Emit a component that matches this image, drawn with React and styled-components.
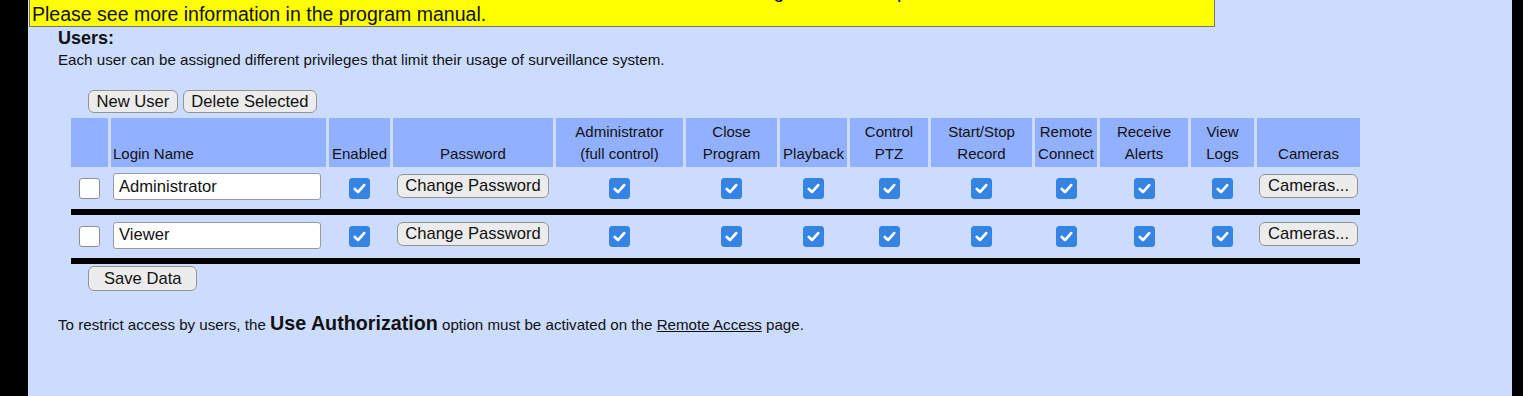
import React from 'react';
import styled, { createGlobalStyle } from 'styled-components';

const GlobalStyle = createGlobalStyle`
  html, body {
    margin: 0;
    padding: 0;
    background: #000;
  }
  body {
    font-family: "Liberation Sans", Arial, sans-serif;
    color: #111;
  }
`;

const Page = styled.div`
  display: flex;
  height: 396px;
  padding: 0 11px 0 28px;
  overflow: hidden;
`;

const Panel = styled.main`
  flex: 1;
  background: #ccdcff;
  overflow: hidden;
`;

const Notice = styled.div`
  box-sizing: border-box;
  width: 1186px;
  margin: -21px 0 0 1px;
  padding: 0 2px;
  background: #ffff00;
  border: 1px solid #767676;
  font-size: 19.5px;
  color: #111;
`;

const Section = styled.section`
  padding-left: 30px;
`;

const Heading = styled.h2`
  margin: 1px 0 0;
  font-size: 18px;
  line-height: 21px;
  font-weight: bold;
`;

const Note = styled.p`
  margin: 2px 0 0;
  font-size: 15.15px;
  line-height: 17px;
`;

const Toolbar = styled.div`
  display: flex;
  gap: 5px;
  margin: 22px 0 0 30px;
`;

const Button = styled.button`
  box-sizing: border-box;
  height: ${p => p.$h || 24}px;
  padding: 0 ${p => (p.$wide ? 15 : 7.5)}px;
  font-family: inherit;
  font-size: 16.6px;
  color: #111;
  background: #ececec;
  border: 1px solid #939393;
  border-radius: 6px;
  cursor: pointer;
`;

const Grid = styled.div`
  display: grid;
  grid-template-columns: 37px 215px 61px 160px 127px 91px 67px 78px 101px 62px 88px 63px 103px;
  column-gap: 3px;
  width: max-content;
  margin: 5px 0 0 13px;
`;

const HeadCell = styled.div`
  box-sizing: border-box;
  height: 49px;
  display: flex;
  align-items: flex-end;
  justify-content: ${p => (p.$left ? 'flex-start' : 'center')};
  padding: 3px 2px 2px;
  background: #91b0ff;
  font-size: 15px;
  line-height: 22px;
  text-align: center;
  white-space: nowrap;
`;

const Cell = styled.div`
  box-sizing: border-box;
  height: ${p => p.$h}px;
  display: flex;
  align-items: center;
  justify-content: ${p => (p.$left ? 'flex-start' : 'center')};
  padding-left: ${p => (p.$left ? 2 : 0)}px;
  padding-bottom: ${p => p.$lift || 0}px;
`;

const Divider = styled.div`
  grid-column: 1 / -1;
  height: 6px;
  background: #000;
`;

const Box = styled.span`
  box-sizing: border-box;
  width: 21px;
  height: 21px;
  display: inline-flex;
  align-items: center;
  justify-content: center;
  border-radius: 3px;
  background: ${p => (p.$on ? '#3584e4' : '#fff')};
  border: 1px solid ${p => (p.$on ? '#3584e4' : '#8f8f8f')};
`;

const NameInput = styled.input`
  box-sizing: border-box;
  width: 208px;
  height: 27px;
  padding: 0 5px;
  font-family: inherit;
  font-size: 16.6px;
  color: #111;
  background: #fff;
  border: 1px solid #9a9a9a;
  border-radius: 3px;
  outline: none;
`;

const SaveRow = styled.div`
  margin: 2px 0 0 30px;
`;

const Footer = styled.p`
  margin: 21px 0 0;
  font-size: 15.15px;
`;

const Big = styled.span`
  font-size: 19.7px;
  font-weight: bold;
`;

const PageLink = styled.a`
  color: #111;
  text-decoration: underline;
`;

const Check = ({ on }) => (
  <Box $on={on}>
    {on && (
      <svg width="15" height="15" viewBox="0 0 14 14">
        <path
          d="M2.6 7.4 L5.6 10.3 L11.4 3.8"
          fill="none"
          stroke="#fff"
          strokeWidth="2.5"
          strokeLinecap="round"
          strokeLinejoin="round"
        />
      </svg>
    )}
  </Box>
);

const columns = [
  [''],
  ['Login Name'],
  ['Enabled'],
  ['Password'],
  ['Administrator', '(full control)'],
  ['Close', 'Program'],
  ['Playback'],
  ['Control', 'PTZ'],
  ['Start/Stop', 'Record'],
  ['Remote', 'Connect'],
  ['Receive', 'Alerts'],
  ['View', 'Logs'],
  ['Cameras'],
];

const users = [
  { name: 'Administrator', h: 42 },
  { name: 'Viewer', h: 43 },
];

const rights = [0, 1, 2, 3, 4, 5, 6, 7];

const UserRow = ({ name, h }) => (
  <>
    <Cell $h={h}><Check on={false} /></Cell>
    <Cell $h={h} $left $lift={3}><NameInput defaultValue={name} /></Cell>
    <Cell $h={h}><Check on /></Cell>
    <Cell $h={h} $lift={5}><Button>Change Password</Button></Cell>
    {rights.map(r => (
      <Cell key={r} $h={h}><Check on /></Cell>
    ))}
    <Cell $h={h} $lift={5}><Button>Cameras...</Button></Cell>
    <Divider />
  </>
);

export default function App() {
  return (
    <>
      <GlobalStyle />
      <Page>
        <Panel>
          <Notice>
            To use this feature an account on the Remote Server must be created and a correct login name and password must be entered.
            <br />
            Please see more information in the program manual.
          </Notice>
          <Section>
            <Heading>Users:</Heading>
            <Note>Each user can be assigned different privileges that limit their usage of surveillance system.</Note>
            <Toolbar>
              <Button $h={23}>New User</Button>
              <Button $h={23}>Delete Selected</Button>
            </Toolbar>
            <Grid>
              {columns.map((lines, i) => (
                <HeadCell key={i} $left={i === 1}>
                  <span>
                    {lines.map((l, j) => (
                      <React.Fragment key={j}>
                        {j > 0 && <br />}
                        {l}
                      </React.Fragment>
                    ))}
                  </span>
                </HeadCell>
              ))}
              {users.map(u => (
                <UserRow key={u.name} {...u} />
              ))}
            </Grid>
            <SaveRow>
              <Button $h={25} $wide>Save Data</Button>
            </SaveRow>
            <Footer>
              To restrict access by users, the <Big>Use Authorization</Big> option must be activated on the{' '}
              <PageLink href="#remote">Remote Access</PageLink> page.
            </Footer>
          </Section>
        </Panel>
      </Page>
    </>
  );
}
